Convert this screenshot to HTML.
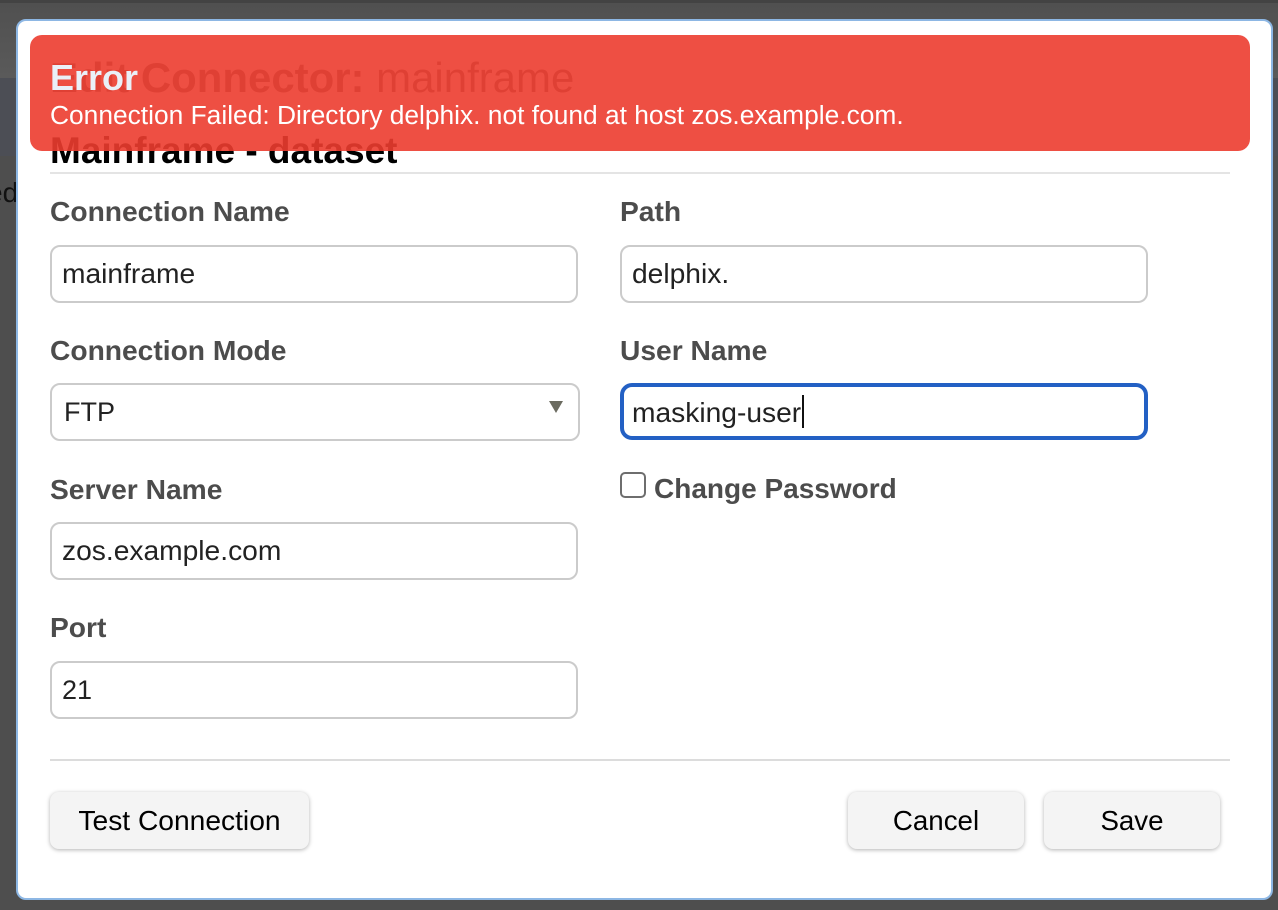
<!DOCTYPE html>
<html><head><meta charset="utf-8"><style>
*{box-sizing:border-box}
html,body{margin:0;padding:0}
body{width:1278px;height:910px;overflow:hidden;position:relative;background:#4e4e4e;font-family:"Liberation Sans",sans-serif}
.a{position:absolute;white-space:nowrap}
.lbl{position:absolute;white-space:nowrap;font-weight:700;font-size:28.2px;line-height:32px;color:#4c4c4c}
.inp{position:absolute;height:58px;border:2px solid #cbcbcb;border-radius:10px;background:#fff;font-size:28.2px;line-height:53px;color:#222;padding-left:10px;white-space:nowrap}
.btn{position:absolute;top:792px;height:57px;border-radius:9px;background:#f4f4f4;box-shadow:0 1px 4px rgba(0,0,0,.3);color:#000;font-size:28.2px;line-height:56px;text-align:center;white-space:nowrap}
</style></head><body>
<div class="a" style="left:0;top:0;width:1278px;height:3px;background:#434343"></div>
<div class="a" style="left:0;top:3px;width:1278px;height:75px;background:linear-gradient(#505050,#5a5a5a)"></div>
<div class="a" style="left:0;top:78px;width:1278px;height:78px;background:#4c4e55"></div>
<div class="a" style="left:0;top:156px;width:1278px;height:754px;background:#4e4e4e"></div>
<div class="a" style="left:-13px;top:177px;font-size:28px;line-height:32px;color:#111">ed</div>

<div class="a" style="left:16px;top:19px;width:1257px;height:881px;background:#fff;border:2px solid #8db7e4;border-radius:10px"></div>

<div class="a" style="left:50px;top:55px;font-size:41.95px;line-height:46px;color:#666"><b>Edit Connector:</b> mainframe</div>
<div class="a" style="left:50px;top:130px;font-size:37px;line-height:42px;font-weight:700;color:#000">Mainframe - dataset</div>

<div class="a" style="left:30px;top:35px;width:1220px;height:116px;background:rgba(236,60,47,.9);border-radius:12px"></div>
<div class="a" style="left:50px;top:58px;font-size:36px;line-height:40px;font-weight:700;color:#eaf0f8">Error</div>
<div class="a" style="left:50px;top:99px;font-size:26.35px;line-height:32px;color:#fff">Connection Failed: Directory delphix. not found at host zos.example.com.</div>

<div class="a" style="left:50px;top:172px;width:1180px;height:2px;background:#e4e4e4"></div>

<div class="lbl" style="left:50px;top:195px">Connection Name</div>
<div class="inp" style="left:50px;top:245px;width:528px">mainframe</div>
<div class="lbl" style="left:620px;top:195px">Path</div>
<div class="inp" style="left:620px;top:245px;width:528px">delphix.</div>

<div class="lbl" style="left:50px;top:334px">Connection Mode</div>
<div class="inp" style="left:50px;top:383px;width:530px;padding-left:12px;font-size:27px;line-height:54px">FTP</div>
<svg class="a" style="left:548px;top:400px" width="16" height="14" viewBox="0 0 16 14"><path d="M1 1H15L8 13Z" fill="#6b6b60"/></svg>

<div class="lbl" style="left:620px;top:334px">User Name</div>
<div class="inp" style="left:620px;top:383px;width:528px;height:57px;border:4px solid #2360c4;border-radius:12px;padding-left:8px;line-height:50px">masking-user</div>
<div class="a" style="left:802px;top:395px;width:2px;height:33px;background:#111"></div>

<div class="a" style="left:620px;top:472px;width:26px;height:26px;border:2px solid #6e6e6e;border-radius:5px;background:#fff"></div>
<div class="lbl" style="left:654px;top:473px;font-size:28px">Change Password</div>

<div class="lbl" style="left:50px;top:473px">Server Name</div>
<div class="inp" style="left:50px;top:522px;width:528px">zos.example.com</div>

<div class="lbl" style="left:50px;top:611px">Port</div>
<div class="inp" style="left:50px;top:661px;width:528px;font-size:27px;line-height:54px">21</div>

<div class="a" style="left:50px;top:759px;width:1180px;height:2px;background:#dcdcdc"></div>

<div class="btn" style="left:50px;width:259px">Test Connection</div>
<div class="btn" style="left:848px;width:176px;font-size:27.7px;line-height:57px">Cancel</div>
<div class="btn" style="left:1044px;width:176px;font-size:27.7px;line-height:57px">Save</div>
</body></html>
